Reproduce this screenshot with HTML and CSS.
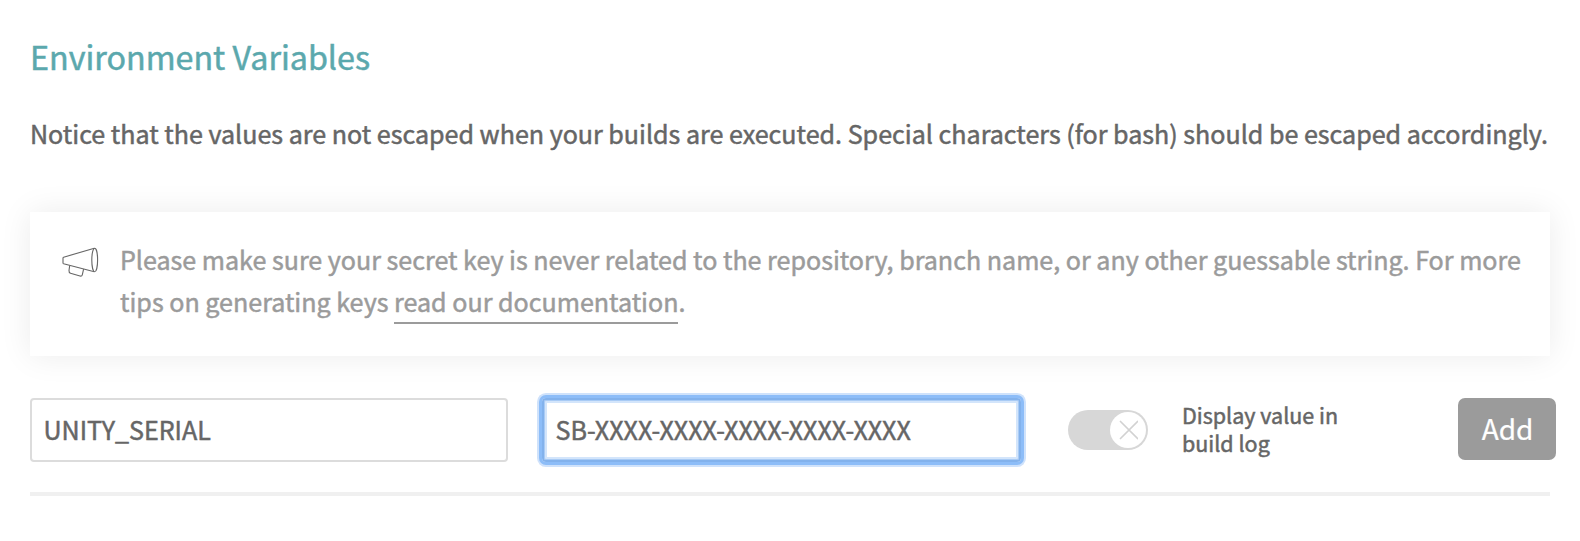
FILE: index.html
```html
<!DOCTYPE html>
<html lang="en">
<head>
<meta charset="utf-8">
<title>Environment Variables</title>
<link rel="stylesheet" href="styles.css">
</head>
<body>
<main class="panel">
  <h1 class="title">Environment Variables</h1>
  <p class="intro">Notice that the values are not escaped when your builds are executed. Special characters (for bash) should be escaped accordingly.</p>
  <section class="notice">
    <svg class="horn" viewBox="0 0 38 32" width="38" height="32" fill="none" stroke="#666" stroke-width="1.1" stroke-linejoin="round">
      <path d="M32.300 2.300 1.600 11.200Q1 11.400 1 12v5q0 .6.600.8L32.300 25.700"/>
      <ellipse cx="32.700" cy="14" rx="2.900" ry="11.700"/>
      <path d="M7.700 19.500 7 24.500q-.2 2 1.500 2.700l9.500 2.800q1.800.5 2.300-1.200l1.300-5.600"/>
    </svg>
    <p class="notice-text">Please make sure your secret key is never related to the repository, branch name, or any other guessable string. For more<br>tips on generating keys <a class="link">read our documentation</a>.</p>
  </section>
  <form class="row">
    <div class="field">UNITY_SERIAL</div>
    <div class="field value">SB-XXXX-XXXX-XXXX-XXXX-XXXX</div>
    <div class="toggle"><div class="knob"><svg viewBox="0 0 20 20" width="20" height="20" stroke="#d2d2d2" stroke-width="1.700" stroke-linecap="round"><path d="M2.500 1.500 19.500 18.500M19.500 1.500 2.500 18.500"/></svg></div></div>
    <div class="label">Display value in<br>build log</div>
    <div class="add">Add</div>
  </form>
</main>
</body>
</html>
```
FILE: styles.css
```css
* { box-sizing: border-box; }
body { margin: 0; background: #fff; color: #666; font-family: "Noto Sans CJK SC", sans-serif; font-weight: 400; -webkit-text-stroke: 0.5px currentColor; }
.panel { padding: 32px 30px 0; }
.title { margin: 0; height: 48px; line-height: 48px; font-size: 32.25px; font-weight: 400; color: #5ba8ad; white-space: nowrap; }
.intro { margin: 32px 0 0; height: 42px; line-height: 42px; font-size: 25.07px; white-space: nowrap; }
.notice { display: flex; margin-top: 58px; height: 144px; padding: 26px 0 0 32px; box-shadow: 0 0 30px rgba(0,0,0,.08); }
.horn { margin-top: 8px; flex: none; }
.notice-text { margin: 0 0 0 20px; font-size: 25.07px; line-height: 42px; color: #9b9b9b; white-space: nowrap; }
.link { display: inline-block; height: 44px; border-bottom: 2px solid #9b9b9b; }
.row { display: flex; margin: 42px 0 0; height: 98px; border-bottom: 4px solid #f0f0f0; }
.field { width: 478px; height: 64px; flex: none; border: 2px solid #dcdcdc; border-radius: 4px; padding-left: 11.5px; font-size: 25.07px; line-height: 58px; white-space: nowrap; }
.value { margin-left: 34px; width: 479px; border: 2px solid #83b2ec; box-shadow: 0 0 0 3px #8dbdf8, 0 0 0 5px #cfe2fb, inset 0 0 0 1px #a9cbf5, inset 0 0 0 3px #d3e5fb; }
.toggle { flex: none; width: 80px; height: 40px; margin: 12px 0 0 47px; border-radius: 20px; background: #d7d7d7; padding: 2px 2px 2px 42px; }
.knob { width: 36px; height: 36px; border-radius: 50%; background: #fff; display: flex; align-items: center; justify-content: center; }
.label { margin: 3px 0 0 34px; font-size: 21.5px; line-height: 28px; white-space: nowrap; width: 276px; flex: none; }
.add { flex: none; width: 98px; height: 62px; border-radius: 7px; background: #9b9b9b; color: #fff; font-size: 28px; line-height: 61px; text-align: center; padding-left: 1px; -webkit-text-stroke-width: 0.2px; }
```
